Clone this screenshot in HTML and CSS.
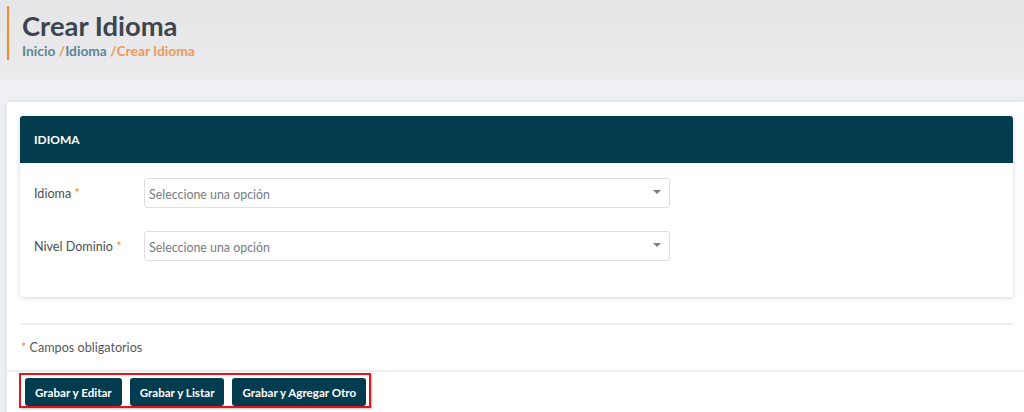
FILE: index.html
```html
<!DOCTYPE html>
<html lang="es">
<head>
    <meta charset="UTF-8">
    <meta name="viewport" content="width=device-width, initial-scale=1.0">
    <title>Crear Idioma</title>
    <link rel="stylesheet" href="styles.css">
</head>
<body>
    <div class="page-header">
        <div class="title-block">
            <h1>Crear Idioma</h1>
            <div class="breadcrumb">
                <span class="crumb">Inicio</span>
                <span class="sep">/</span><span class="crumb">Idioma</span>
                <span class="current">/Crear Idioma</span>
            </div>
        </div>
    </div>

    <div class="content">
        <div class="panel">
            <div class="card">
                <div class="card-header">IDIOMA</div>
                <div class="card-body">
                    <div class="form-row">
                        <label>Idioma <span class="req">*</span></label>
                        <div class="select">
                            <span>Seleccione una opción</span>
                            <span class="caret"></span>
                        </div>
                    </div>
                    <div class="form-row">
                        <label>Nivel Dominio <span class="req">*</span></label>
                        <div class="select">
                            <span>Seleccione una opción</span>
                            <span class="caret"></span>
                        </div>
                    </div>
                </div>
            </div>

            <hr class="divider">
            <p class="note"><span class="req">*</span> Campos obligatorios</p>

            <div class="actions">
                <div class="button-group">
                    <button type="button">Grabar y Editar</button>
                    <button type="button">Grabar y Listar</button>
                    <button type="button">Grabar y Agregar Otro</button>
                </div>
            </div>
        </div>
    </div>
</body>
</html>
```

FILE: styles.css
```css
body {
    font-family: Lato, "Noto Sans", sans-serif;
    margin: 0;
    background-color: #eef0f3;
    color: #4a4f55;
}
.page-header {
    height: 80px;
    box-sizing: border-box;
    padding: 6px 0 0 7px;
    background: linear-gradient(#e5e5e7, #ececee);
}
.title-block {
    border-left: 2px solid #f08a2c;
    padding: 4px 0 1px 13px;
}
h1 {
    margin: 0;
    font-size: 27.4px;
    line-height: 32px;
    font-weight: 700;
    color: #3d4650;
}
.breadcrumb {
    font-size: 13.8px;
    font-weight: 700;
    line-height: 17px;
    color: #5a8797;
}
.sep, .current {
    color: #ec9a5c;
}
.content {
    padding: 22px 0 0 7px;
}
.panel {
    background-color: #ffffff;
    box-shadow: 0 0 6px rgba(0, 0, 0, 0.08);
    padding: 14px 11px 0 13px;
}
.card {
    border-radius: 3px;
    box-shadow: 0 1px 5px rgba(0, 0, 0, 0.16);
    overflow: hidden;
}
.card-header {
    height: 47px;
    line-height: 47px;
    padding-left: 14px;
    background-color: #033c4f;
    color: #ffffff;
    font-size: 12px;
    font-weight: 700;
}
.card-body {
    padding: 15px 14px 36px;
    display: flex;
    flex-direction: column;
    gap: 23px;
}
.form-row {
    display: flex;
    align-items: center;
}
.form-row label {
    width: 110px;
    font-size: 12.6px;
    color: #4a4f55;
}
.req {
    color: #f08a2c;
}
.select {
    width: 526px;
    height: 30px;
    box-sizing: border-box;
    border: 1px solid #dcdfe3;
    border-radius: 3px;
    display: flex;
    align-items: center;
    justify-content: space-between;
    padding: 3px 8px 0 4px;
    font-size: 12.4px;
    color: #777c82;
}
.caret {
    width: 0;
    height: 0;
    border-left: 4px solid transparent;
    border-right: 4px solid transparent;
    border-top: 4px solid #7a7f86;
    margin-bottom: 5px;
}
.divider {
    border: none;
    border-top: 2px solid #eceef0;
    margin: 26px 0 0;
}
.note {
    margin: 0;
    padding: 15px 0 0 1px;
    height: 30px;
    font-size: 12.6px;
    color: #555a60;
}
.actions {
    margin: 0 -11px 0 -13px;
    border-top: 2px solid #eceef0;
    padding: 1px 0 10px 12px;
}
.button-group {
    display: inline-flex;
    gap: 8px;
    border: 2px solid #e3141b;
    padding: 3px 3px 0 4px;
    box-shadow: 1px 1px 2px rgba(0, 0, 0, 0.25);
}
button {
    background-color: #033c4f;
    color: #ffffff;
    font-family: Lato, "Noto Sans", sans-serif;
    font-size: 11.6px;
    font-weight: 700;
    height: 28px;
    padding: 0 10px;
    border: none;
    border-radius: 3px;
    cursor: pointer;
}
```
